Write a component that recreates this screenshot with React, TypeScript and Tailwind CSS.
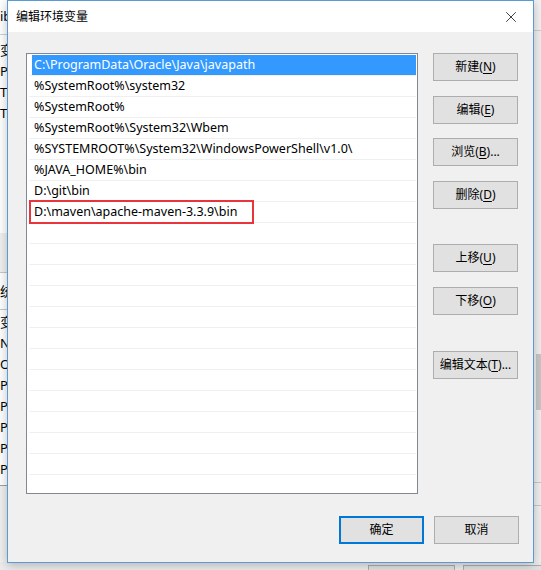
import { X } from "lucide-react";

const paths = [
  "C:\\ProgramData\\Oracle\\Java\\javapath",
  "%SystemRoot%\\system32",
  "%SystemRoot%",
  "%SystemRoot%\\System32\\Wbem",
  "%SYSTEMROOT%\\System32\\WindowsPowerShell\\v1.0\\",
  "%JAVA_HOME%\\bin",
  "D:\\git\\bin",
  "D:\\maven\\apache-maven-3.3.9\\bin",
];

const font = { fontFamily: '"Noto Sans", "Noto Sans CJK SC", sans-serif' };

function Btn({ label, hot, suffix, primary }: { label: string; hot?: string; suffix?: string; primary?: boolean }) {
  return (
    <button
      className={
        "w-[85px] h-[28px] flex items-center justify-center text-[12px] text-black bg-[#e1e1e1] " +
        (primary ? "border-2 border-[#0078d7]" : "border border-[#adadad]")
      }
    >
      {label}
      {hot && (
        <>
          (<span className="underline underline-offset-2">{hot}</span>)
        </>
      )}
      {suffix}
    </button>
  );
}

export default function App() {
  const rows = Array.from({ length: 21 }, (_, i) => paths[i] ?? "");

  return (
    <div className="relative w-[541px] h-[570px] overflow-hidden bg-[#ececec]" style={font}>
      {/* window behind the dialog, left edge */}
      <div className="absolute left-0 top-0 w-[8px] h-[570px] bg-[#f0f0f0] text-[13px] text-black leading-[13px] overflow-hidden flex flex-col">
        <div className="h-[35px] pt-[10px] bg-white border-b border-[#d0d0d0]">ib</div>
        <div className="h-[198px] bg-white flex flex-col gap-[8px] pt-[9px]">
          <span>变</span>
          <span>Pa</span>
          <span>TE</span>
          <span>TM</span>
        </div>
        <div className="h-[40px] border-b border-[#c8c8c8]" />
        <div className="h-[37px] pt-[12px] border-b border-[#c8c8c8] bg-white">统</div>
        <div className="h-[175px] bg-white flex flex-col gap-[8px] pt-[6px]">
          <span>变</span>
          <span>N</span>
          <span>O</span>
          <span>Pa</span>
          <span>PA</span>
          <span>PF</span>
          <span>PF</span>
          <span>PF</span>
        </div>
        <div className="border-t border-[#a0a0a0]" />
      </div>

      {/* window behind the dialog, right edge */}
      <div className="absolute right-0 top-0 w-[8px] h-[570px] bg-[#f0f0f0] flex flex-col">
        <div className="h-[30px] bg-[#f3f3f3]" />
        <div className="h-[4px] border-t border-[#d0d0d0]" />
        <div className="ml-[3px] mt-[320px] h-[56px] w-[5px] bg-[#c8c8c8]" />
        <div className="mt-[72px] border-t border-[#c8c8c8]" />
        <div className="mt-[22px] border-t border-[#c8c8c8]" />
      </div>

      {/* bottom edge of the window behind */}
      <div className="absolute left-0 bottom-0 w-[541px] h-[8px] bg-[#ececec]">
        <div className="absolute left-[368px] top-[3px] w-[87px] h-[6px] bg-[#e1e1e1] border border-[#adadad]" />
        <div className="absolute left-[463px] top-[3px] w-[80px] h-[6px] bg-[#e1e1e1] border border-[#adadad]" />
      </div>

      {/* dialog */}
      <div className="absolute left-[7px] top-0 w-[527px] h-[563px] border border-[#5a9bd5] bg-[#f0f0f0] flex flex-col shadow-[0_2px_10px_rgba(0,0,0,0.25)]">
        <div className="h-[31px] bg-white flex items-center justify-between pl-[8px] pr-[13px]">
          <span className="text-[12px] text-black">编辑环境变量</span>
          <X size={18} strokeWidth={1} className="text-black" />
        </div>

        <div className="flex flex-col pt-[21px] pl-[18px] pr-[14px]">
          <div className="flex gap-[15px]">
            <div className="w-[392px] h-[441px] bg-white border border-[#828790] pt-[1px] pl-[2px] pr-[1px]">
              {rows.map((p, i) => (
                <div key={i} className="h-[21px] border-b border-[#f0f0f0] relative">
                  <div
                    className={
                      "h-[20px] ml-[3px] pl-[2px] flex items-center text-[12.5px] whitespace-nowrap " +
                      (i === 0 ? "bg-[#3399ff] text-white" : "text-black")
                    }
                  >
                    {p}
                  </div>
                  {i === 7 && (
                    <div className="absolute left-0 top-[-2px] w-[225px] h-[24px] border-2 border-[#e8343a]" />
                  )}
                </div>
              ))}
            </div>

            <div className="flex flex-col">
              <Btn label="新建" hot="N" />
              <div className="mt-[15px]">
                <Btn label="编辑" hot="E" />
              </div>
              <div className="mt-[14px]">
                <Btn label="浏览" hot="B" suffix="..." />
              </div>
              <div className="mt-[15px]">
                <Btn label="删除" hot="D" />
              </div>
              <div className="mt-[35px]">
                <Btn label="上移" hot="U" />
              </div>
              <div className="mt-[15px]">
                <Btn label="下移" hot="O" />
              </div>
              <div className="mt-[36px]">
                <Btn label="编辑文本" hot="T" suffix="..." />
              </div>
            </div>
          </div>

          <div className="flex justify-end gap-[10px] mt-[22px]">
            <Btn label="确定" primary />
            <Btn label="取消" />
          </div>
        </div>
      </div>
    </div>
  );
}
